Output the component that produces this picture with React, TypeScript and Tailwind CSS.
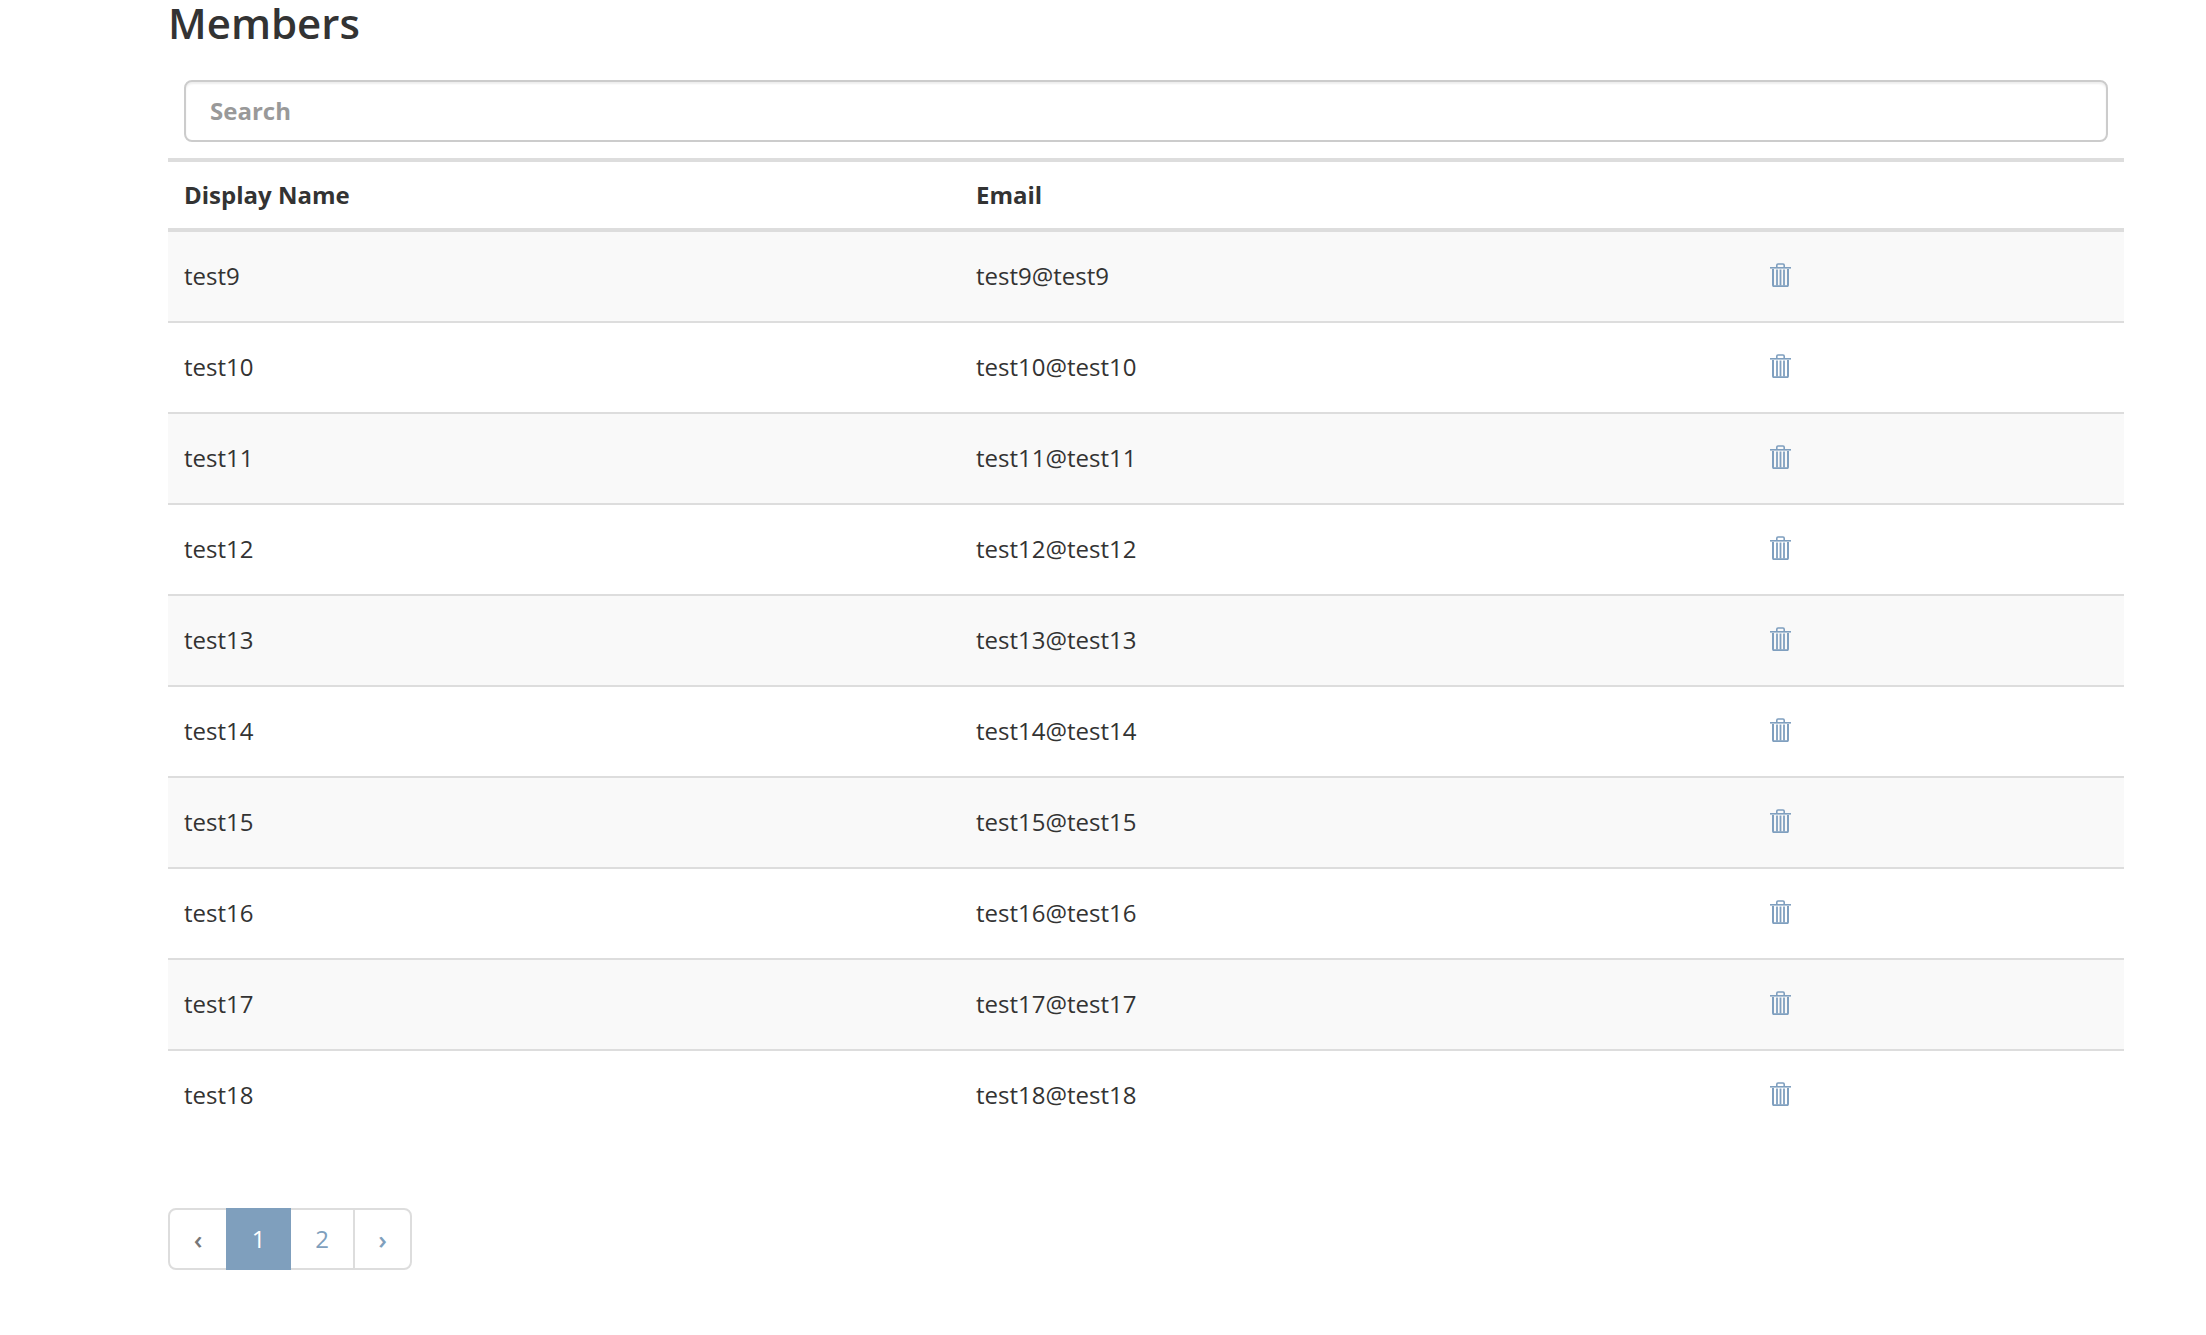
const members = [9, 10, 11, 12, 13, 14, 15, 16, 17, 18];

function TrashIcon() {
  return (
    <svg width="21" height="24" viewBox="0 0 21 24" fill="none" stroke="#7f9fbf" className="block">
      <path d="M6.8 4V2.2A1.2 1.2 0 0 1 8 1h5a1.2 1.2 0 0 1 1.2 1.2V4" strokeWidth="1.6" />
      <path d="M0 4.8h21" strokeWidth="1.6" />
      <path d="M3 6v16a1.2 1.2 0 0 0 1.2 1.2h12.6a1.2 1.2 0 0 0 1.2-1.2V6" strokeWidth="2" />
      <path d="M7 6.5v16M10.5 6.5v16M14 6.5v16" strokeWidth="1.8" />
    </svg>
  );
}

export default function App() {
  return (
    <div className="min-h-[1335px] bg-white pl-[168px] pr-[82px] font-['Open_Sans',sans-serif] text-[24px] text-[#333333]">
      <h1 className="h-[80px] text-[42px] font-semibold leading-[46px]">Members</h1>
      <div className="px-4">
        <div className="flex h-[62px] items-center rounded-lg border-2 border-[#cccccc] px-6 font-bold text-[#999999] shadow-[inset_0_2px_2px_rgba(0,0,0,0.07)]">
          Search
        </div>
      </div>
      <table className="mt-4 w-full table-fixed border-collapse text-left">
        <thead>
          <tr className="border-y-4 border-[#dddddd]">
            <th className="h-[70px] w-[792px] px-4 font-bold">Display Name</th>
            <th className="w-[792px] px-4 font-bold">Email</th>
            <th />
          </tr>
        </thead>
        <tbody>
          {members.map((n, i) => (
            <tr
              key={n}
              className={`${i === 0 ? "h-[92px]" : "h-[91px]"} ${i < 9 ? "border-b-2 border-[#dddddd]" : ""} ${i % 2 === 0 ? "bg-[#f9f9f9]" : ""}`}
            >
              <td className="px-4 pb-0.5">test{n}</td>
              <td className="px-4 pb-0.5">
                test{n}@test{n}
              </td>
              <td className="px-4">
                <button aria-label="Delete member" className="mb-1 ml-0.5 block">
                  <TrashIcon />
                </button>
              </td>
            </tr>
          ))}
        </tbody>
      </table>
      <nav className="mt-[67px] flex h-[62px] w-[244px] rounded-lg border-2 border-[#dddddd]">
        <span className="flex w-[56px] items-center justify-center text-[26px] font-semibold text-[#777777]">‹</span>
        <span className="my-[-2px] flex w-[65px] items-center justify-center bg-[#7f9fbd] text-white">1</span>
        <span className="flex w-[62px] items-center justify-center text-[#7f9fbd]">2</span>
        <span className="flex flex-1 items-center justify-center border-l-2 border-[#dddddd] text-[26px] font-semibold text-[#7f9fbd]">›</span>
      </nav>
    </div>
  );
}
